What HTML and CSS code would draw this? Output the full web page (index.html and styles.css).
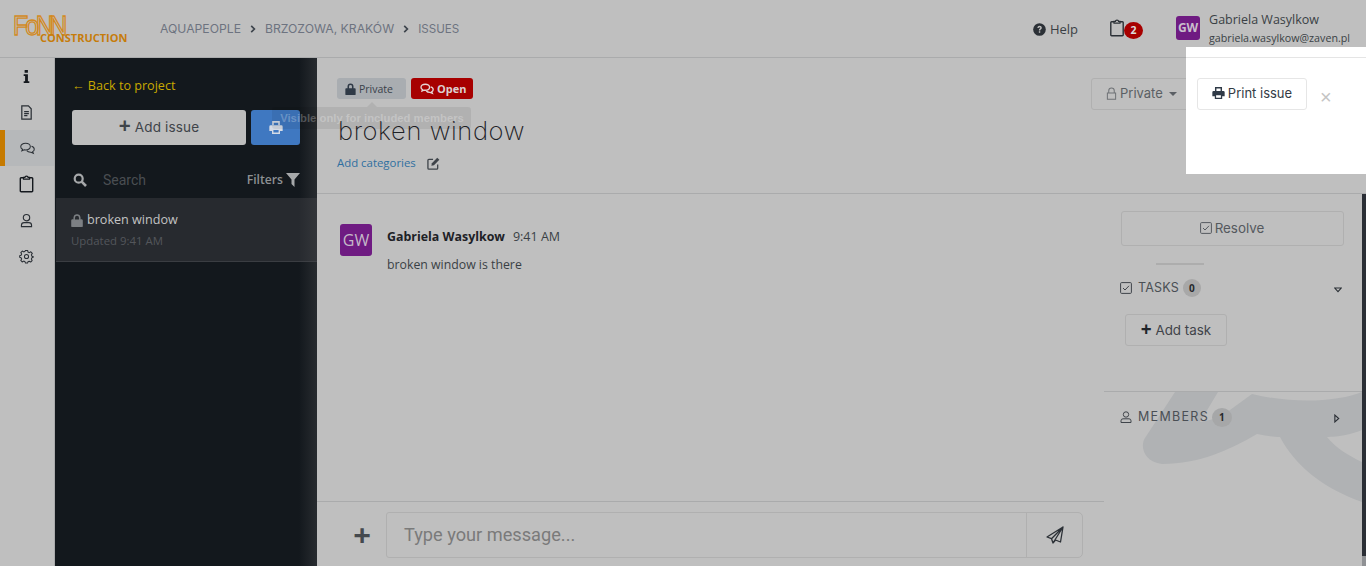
FILE: index.html
```html
<!DOCTYPE html>
<html lang="en">
<head>
<meta charset="utf-8">
<title>broken window</title>
<link rel="stylesheet" href="styles.css">
</head>
<body>
<div class="app">
  <header class="topbar">
    <div class="logo">
      <span class="logo-mark"><span class="lm-f">F</span><span class="lm-o">o</span><span class="lm-n">N</span>N</span>
      <span class="logo-sub">CONSTRUCTION</span>
    </div>
    <nav class="crumbs">
      <span>AQUAPEOPLE</span>
      <svg class="chev" viewBox="0 0 6 8"><path d="M1.2 .8 4.4 4 1.2 7.2" fill="none" stroke="#3d444c" stroke-width="1.7"/></svg>
      <span>BRZOZOWA, KRAKÓW</span>
      <svg class="chev" viewBox="0 0 6 8"><path d="M1.2 .8 4.4 4 1.2 7.2" fill="none" stroke="#3d444c" stroke-width="1.7"/></svg>
      <span class="crumb-last">ISSUES</span>
    </nav>
    <div class="top-right">
      <a class="help">
        <svg class="help-ico" viewBox="0 0 14 14"><circle cx="7" cy="7" r="6.8" fill="#2b3036"/><path d="M4.700 5.300C4.800 3.900 5.800 3 7.100 3 8.400 3 9.500 3.900 9.500 5.100 9.500 6.700 7.800 6.700 7.800 8H6.300C6.300 6 7.900 6.100 7.900 5.200 7.900 4.800 7.500 4.500 7 4.500 6.500 4.500 6.200 4.800 6.100 5.500ZM6.300 8.800H7.800V10.500H6.300Z" fill="#bfbfbf"/></svg>
        Help
      </a>
      <div class="tasks-badge">
        <svg class="clip" viewBox="0 0 14 18"><path d="M4 2.800H1.600A.8.8 0 0 0 .8 3.600V16A.8.8 0 0 0 1.600 16.800H12.400A.8.8 0 0 0 13.200 16V3.600A.8.8 0 0 0 12.400 2.800H10" fill="none" stroke="#2b3036" stroke-width="1.400"/><path d="M4 4.200V2.400H5.400C5.500 .6 8.500 .6 8.600 2.400H10V4.200Z" fill="none" stroke="#2b3036" stroke-width="1.200"/></svg>
        <span class="count">2</span>
      </div>
      <div class="user">
        <span class="avatar-sm">GW</span>
        <div class="user-text">
          <div class="user-name">Gabriela Wasylkow</div>
          <div class="user-mail">gabriela.wasylkow@zaven.pl</div>
        </div>
      </div>
    </div>
  </header>

  <div class="body">
    <aside class="rail">
      <div class="rail-item"><svg class="ri" viewBox="0 0 16 16"><path d="M6 1H9.500V4H6ZM5 5.500H9.500V13H11V15H5V13H6.500V7.500H5Z" fill="#15191e"/></svg></div>
      <div class="rail-item"><svg class="ri" viewBox="0 0 16 16"><path d="M3 1H10L13 4V15H3ZM5.500 7H10.500M5.500 9.200H10.500M5.500 11.400H9" fill="none" stroke="#2a2f35" stroke-width="1.300"/></svg></div>
      <div class="rail-item active"><svg class="ri" viewBox="0 0 16 16"><path d="M6 2.500C3 2.500 .8 4 .8 6 .8 7.200 1.500 8.200 2.700 8.800L2 10.500 4.600 9.400C5 9.450 5.500 9.500 6 9.500 9 9.500 11 8 11 6 11 4 9 2.500 6 2.500Z" fill="none" stroke="#2a2f35" stroke-width="1.100"/><path d="M12.300 5.600C14.100 6.100 15.200 7.300 15.200 8.700 15.200 9.800 14.600 10.700 13.500 11.300L14.200 13 11.700 11.900C9.900 12 8.100 11.400 7.200 10.300" fill="none" stroke="#2a2f35" stroke-width="1.100"/></svg></div>
      <div class="rail-item"><svg class="ri ri-tall" viewBox="0 0 14 18"><path d="M4 2.800H1.600A.8.8 0 0 0 .8 3.600V16A.8.8 0 0 0 1.600 16.800H12.400A.8.8 0 0 0 13.200 16V3.600A.8.8 0 0 0 12.400 2.800H10" fill="none" stroke="#15191e" stroke-width="1.400"/><path d="M4 4.200V2.400H5.400C5.500 .6 8.500 .6 8.600 2.400H10V4.200Z" fill="none" stroke="#15191e" stroke-width="1.200"/></svg></div>
      <div class="rail-item"><svg class="ri" viewBox="0 0 16 16"><circle cx="8" cy="5" r="3.400" fill="none" stroke="#2a2f35" stroke-width="1.200"/><path d="M2.600 14.500V13A2.800 2.800 0 0 1 5.400 10.300H10.600A2.800 2.800 0 0 1 13.400 13V14.500Z" fill="none" stroke="#2a2f35" stroke-width="1.200"/></svg></div>
      <div class="rail-item"><svg class="ri" viewBox="0 0 16 16"><circle cx="8" cy="8" r="2.200" fill="none" stroke="#2a2f35" stroke-width="1.100"/><path d="M6.800 1.500H9.200L9.600 3.300 11 3.900 12.600 3 14.200 4.700 13.200 6.200 13.800 7.700 15.300 8.200V8.700L13.800 9.400 13.200 10.600 14 12.300 12.400 13.900 10.900 13 9.600 13.600 9.100 15H6.900L6.400 13.500 5 12.900 3.400 13.800 1.900 12.200 2.800 10.700 2.200 9.300.7 8.800V7.200L2.200 6.700 2.800 5.300 1.900 3.800 3.500 2.200 5 3.100 6.400 2.500Z" fill="none" stroke="#2a2f35" stroke-width="1.100" stroke-linejoin="round"/></svg></div>
    </aside>

    <section class="issues">
      <a class="back">← Back to project</a>
      <div class="issue-actions">
        <button class="btn-add"><span class="plus">+</span> Add issue</button>
        <button class="btn-print">
          <svg class="pr" viewBox="0 0 16 15"><path d="M4.500 5V1H11.500V5" fill="none" stroke="#d4dbe6" stroke-width="1.800"/><path d="M1.800 5H14.200A1.500 1.500 0 0 1 15.700 6.500V11.500H.3V6.500A1.500 1.500 0 0 1 1.800 5Z" fill="#d4dbe6"/><path d="M4.200 9.500H11.800V14.100H4.200Z" fill="#3f78c1" stroke="#d4dbe6" stroke-width="1.600"/></svg>
        </button>
      </div>
      <div class="search-row">
        <svg class="mag" viewBox="0 0 14 14"><circle cx="5.700" cy="5.700" r="4" fill="none" stroke="#a6a8aa" stroke-width="2.200"/><path d="M8.700 8.700 13 13" stroke="#a6a8aa" stroke-width="2.600"/></svg>
        <span class="search-ph">Search</span>
        <span class="filters">Filters</span>
        <svg class="funnel" viewBox="0 0 14 14"><path d="M0 0H14L8.500 6.500V14L5.500 11V6.500Z" fill="#a6a8aa"/></svg>
      </div>
      <div class="issue-item">
        <div class="issue-name">
          <svg class="lock-i" viewBox="0 0 12 14"><path d="M2.500 6V4A3.500 3.500 0 0 1 9.500 4V6M1 6H11A1 1 0 0 1 12 7V13A1 1 0 0 1 11 14H1A1 1 0 0 1 0 13V7A1 1 0 0 1 1 6Z" fill="#7d8084" stroke="#7d8084" stroke-width=".6"/><path d="M3.800 6V4.200A2.200 2.200 0 0 1 8.200 4.200V6Z" fill="#272a2f"/></svg>
          broken window
        </div>
        <div class="issue-time">Updated 9:41 AM</div>
      </div>
    </section>

    <main class="content">
      <div class="issue-head">
        <div class="tags">
          <span class="tag tag-private">
            <svg class="tag-ico" viewBox="0 0 12 14"><path d="M2.500 6V4A3.500 3.500 0 0 1 9.500 4V6H11A1 1 0 0 1 12 7V13A1 1 0 0 1 11 14H1A1 1 0 0 1 0 13V7A1 1 0 0 1 1 6ZM4.300 6H7.700V4A1.700 1.700 0 0 0 4.300 4Z" fill="#2f3a47"/></svg>
            Private
          </span>
          <span class="tag tag-open">
            <svg class="tag-ico2" viewBox="0 0 16 14"><path d="M6 1.500C3 1.500 1 3 1 5 1 6.100 1.600 7.100 2.700 7.700L2.200 9.300 4.500 8.400C5 8.450 5.500 8.500 6 8.500 9 8.500 11 7 11 5 11 3 9 1.500 6 1.500ZM12.300 4.600C14.100 5.100 15.200 6.300 15.200 7.700 15.200 8.800 14.600 9.700 13.500 10.300L14.200 12 11.700 10.900C9.900 11 8.100 10.400 7.200 9.300" fill="none" stroke="#e6d4d4" stroke-width="1.600"/></svg>
            Open
          </span>
        </div>
        <h1 class="title">broken window</h1>
        <div class="cats">
          <a class="cats-link">Add categories</a>
          <svg class="edit" viewBox="0 0 14 14"><path d="M6.500 2.500H2A1 1 0 0 0 1 3.500V12A1 1 0 0 0 2 13H10.500A1 1 0 0 0 11.500 12V8" fill="none" stroke="#3f444a" stroke-width="1.400"/><path d="M11 .8 13.300 3 7.500 8.800 4.700 9.400 5.300 6.600Z" fill="#3f444a"/></svg>
        </div>
      </div>
      <div class="columns">
        <div class="chat">
          <div class="messages">
            <div class="message">
              <span class="avatar-lg">GW</span>
              <div class="msg-body">
                <div class="msg-meta"><strong>Gabriela Wasylkow</strong><span class="msg-time">9:41 AM</span></div>
                <div class="msg-text">broken window is there</div>
              </div>
            </div>
          </div>
          <div class="composer">
            <span class="composer-plus">+</span>
            <div class="composer-box">
              <span class="composer-ph">Type your message...</span>
              <span class="composer-send">
                <svg class="send" viewBox="0 0 18 18"><path d="M17 1 1 11 5.500 12.700 7 17 9.500 14 14.500 16ZM17 1 5.500 12.700M17 1 7 17" fill="none" stroke="#2b3036" stroke-width="1.300" stroke-linejoin="round"/></svg>
              </span>
            </div>
          </div>
        </div>
        <aside class="side">
          <svg class="swirl" viewBox="0 0 258 175"><path d="M71 0 41 46C36 53 39 70 58 72 96 72 125 58 153 42 162 44 170 45 176 45 190 72 218 96 258 110V70C245 64 232 56 223 45 236 45 248 42 258 38V0C232 10 190 12 148 2L126 18C120 22 112 28 96 30L114 0Z" fill="#b0b2b4"/></svg>
          <div class="side-top">
            <button class="btn-resolve">
              <svg class="chk" viewBox="0 0 12 12"><rect x=".6" y=".6" width="10.800" height="10.800" rx="1" fill="none" stroke="#555a60" stroke-width="1"/><path d="M3 6 5 8 9 3.800" fill="none" stroke="#555a60" stroke-width="1"/></svg>
              Resolve
            </button>
            <div class="short-rule"></div>
            <div class="sec-head">
              <svg class="chk2" viewBox="0 0 12 12"><rect x=".6" y=".6" width="10.800" height="10.800" rx="1" fill="none" stroke="#3f444a" stroke-width="1"/><path d="M3 6 5 8 9 3.800" fill="none" stroke="#3f444a" stroke-width="1"/></svg>
              <span class="sec-title">TASKS</span>
              <span class="pill">0</span>
              <svg class="tri-d" viewBox="0 0 10 7"><path d="M1 1H9L5 5.500Z" fill="none" stroke="#2b3036" stroke-width="1.300"/></svg>
            </div>
            <button class="btn-task"><span class="plus plus-sm">+</span> Add task</button>
          </div>
          <div class="side-bottom">
            <div class="sec-head sec-members">
              <svg class="chk2" viewBox="0 0 12 12"><circle cx="6" cy="3.500" r="2.700" fill="none" stroke="#3f444a" stroke-width="1"/><path d="M1 11.500V9.800A2 2 0 0 1 3 7.800H9A2 2 0 0 1 11 9.800V11.500Z" fill="none" stroke="#3f444a" stroke-width="1"/></svg>
              <span class="sec-title sec-title-m">MEMBERS</span>
              <span class="pill pill-m">1</span>
              <svg class="tri-r" viewBox="0 0 7 10"><path d="M1 1V9L5.500 5Z" fill="none" stroke="#2b3036" stroke-width="1.300"/></svg>
            </div>
          </div>
        </aside>
        <div class="scrollbar"></div>
      </div>
    </main>
  </div>

  <div class="tooltip">Visible only for included members</div>
  <button class="btn-private">
    <svg class="lock-o" viewBox="0 0 12 14"><path d="M3 6V4A3 3 0 0 1 9 4V6M1.500 6.500H10.500V13.300H1.500Z" fill="none" stroke="#6f7276" stroke-width="1.100"/></svg>
    Private
    <span class="caret"></span>
  </button>
  <div class="spotlight">
    <div class="spot-rule"></div>
    <button class="btn-printissue">
      <svg class="pr2" viewBox="0 0 16 15"><path d="M4.500 5V1H11.500V5" fill="none" stroke="#2f3a47" stroke-width="1.800"/><path d="M1.800 5H14.200A1.500 1.500 0 0 1 15.700 6.500V11.500H.3V6.500A1.500 1.500 0 0 1 1.800 5Z" fill="#2f3a47"/><path d="M4.200 9.500H11.800V14.100H4.200Z" fill="#fff" stroke="#2f3a47" stroke-width="1.600"/></svg>
      Print issue
    </button>
    <span class="close">×</span>
  </div>
</div>
</body>
</html>
```
FILE: styles.css
```css
* { box-sizing: border-box; }
html, body { margin: 0; height: 100%; }
body { background: #bfbfbf; font-family: "Open Sans", "Noto Sans", sans-serif; color: #2b3036; overflow: hidden; }
button { font-family: inherit; cursor: pointer; }
.app { position: relative; width: 1366px; height: 566px; overflow: hidden; display: flex; flex-direction: column; }

.topbar { height: 58px; flex: none; display: flex; align-items: center; border-bottom: 1px solid #aaabac; }
.logo { position: relative; width: 160px; height: 58px; flex: none; }
.logo-mark { position: absolute; left: 13px; top: 9px; font: 400 25px/32px "Liberation Sans", sans-serif; letter-spacing: -4.500px; color: transparent; -webkit-text-stroke: 1.200px #d38a1e; transform: scaleY(1.1); }
.lm-f { letter-spacing: -3px; }
.lm-o { letter-spacing: -3.500px; }
.lm-n { letter-spacing: -4.500px; }
.logo-sub { position: absolute; left: 40px; top: 30px; font: 700 11px/16px "Open Sans", sans-serif; color: #c67c0b; }
.crumbs { display: flex; align-items: center; font: 400 12.200px/16px "Inter", sans-serif; color: #6d7380; }
.crumb-last { font-size: 11.600px; }
.chev { width: 6px; height: 8px; margin: 0 9px; }
.top-right { margin-left: auto; display: flex; align-items: center; }
.help { display: flex; align-items: center; gap: 4px; font-size: 13px; color: #3a3f45; margin-top: 1px; }
.help-ico { width: 13px; height: 13px; }
.tasks-badge { position: relative; width: 33px; height: 22px; margin-left: 32px; }
.clip { width: 14px; height: 18px; position: absolute; left: 0; top: 1px; }
.count { position: absolute; left: 14px; top: 4px; width: 19px; height: 17px; border-radius: 50%; background: #a70000; color: #dcdcdc; font: 700 10.500px/17px "Open Sans", sans-serif; text-align: center; }
.user { display: flex; align-items: flex-start; margin-left: 33px; margin-right: 16px; margin-top: -1px; }
.avatar-sm { width: 24px; height: 24px; border-radius: 3px; background: #6f1b82; color: #c9bfcc; font: 700 12px/24px "Open Sans", sans-serif; text-align: center; margin-top: 5px; }
.user-text { margin-left: 9px; }
.user-name { font: 400 12.500px/17px "Open Sans", sans-serif; color: #3a3f45; }
.user-mail { font: 400 10.700px/15px "Open Sans", sans-serif; color: #3a3f45; margin-top: 3px; }

.body { flex: 1; display: flex; min-height: 0; }
.rail { width: 55px; flex: none; border-right: 1px solid #aaabac; }
.rail-item { height: 36px; display: flex; align-items: center; justify-content: center; padding-right: 1px; }
.rail-item.active { background: #b6b8ba; border-left: 5px solid #c67a00; padding-right: 5px; }
.ri { width: 15px; height: 15px; }
.ri-tall { height: 18px; }

.issues { width: 262px; flex: none; background: #13181d; display: flex; flex-direction: column; position: relative; }
.issues::after { content: ""; position: absolute; right: 0; top: 0; bottom: 0; width: 18px; background: linear-gradient(to right, rgba(60,60,60,0), rgba(70,72,75,.4)); pointer-events: none; }
.back { display: block; margin: 19px 0 0 17px; font-size: 12.600px; line-height: 17px; color: #c9a800; }
.issue-actions { display: flex; gap: 5px; margin: 16px 0 0 17px; height: 35px; }
.btn-add { width: 174px; height: 35px; border: 0; border-radius: 3px; background: #bdbdbd; color: #3f444a; font: 400 13.500px/35px "Inter", sans-serif; letter-spacing: .15px; padding: 0; }
.plus { font: 700 21px/1 "Open Sans", sans-serif; color: #3f444a; vertical-align: -1px; }
.btn-print { width: 49px; height: 35px; border: 0; border-radius: 3px; background: #3f78c1; display: flex; align-items: center; justify-content: center; padding: 0; }
.pr { width: 14px; height: 13px; }
.search-row { display: flex; align-items: center; height: 20px; margin: 25px 17px 0 18px; }
.mag { width: 14px; height: 14px; }
.search-ph { margin-left: 16px; font: 400 14px/20px "Roboto", sans-serif; color: #4a4e52; }
.filters { margin-left: auto; margin-top: -2px; font-size: 12.200px; font-weight: 600; color: #8d9093; }
.funnel { width: 14px; height: 14px; margin-left: 3px; }
.issue-item { height: 64px; margin: 8px 0 0 1px; background: #272a2f; border-bottom: 1px solid #3a3d42; padding: 13px 0 0 15px; }
.issue-name { display: flex; align-items: center; gap: 4px; font-size: 12.600px; line-height: 18px; color: #c3c3c3; }
.lock-i { width: 12px; height: 13px; }
.issue-time { font-size: 11.400px; line-height: 16px; color: #53565b; margin-top: 4px; }

.content { flex: 1; display: flex; flex-direction: column; min-width: 0; }
.issue-head { height: 136px; flex: none; padding: 20px 0 0 20px; border-bottom: 1px solid #aaabac; }
.tags { display: flex; gap: 5px; }
.tag { display: flex; align-items: center; height: 21px; border-radius: 3px; font-size: 10.500px; line-height: 22px; }
.tag-private { width: 69px; background: #a9adb1; color: #39414a; padding-left: 8px; gap: 3px; }
.tag-open { width: 62px; background: #a70000; color: #dcd0d0; font-weight: 700; font-size: 11px; padding-left: 9px; gap: 3px; }
.tag-ico { width: 11px; height: 12px; }
.tag-ico2 { width: 14px; height: 12px; }
.title { margin: 15px 0 0 1px; font: 200 25.500px/34px "Inter", sans-serif; letter-spacing: .6px; color: #1d2126; }
.cats { display: flex; align-items: center; margin-top: 7px; }
.cats-link { font-size: 11.400px; line-height: 16px; color: #2f6f9f; }
.edit { width: 13px; height: 13px; margin-left: 11px; }

.columns { flex: 1; display: flex; min-height: 0; }
.chat { width: 787px; flex: none; display: flex; flex-direction: column; }
.messages { flex: 1; padding: 30px 0 0 23px; }
.message { display: flex; }
.avatar-lg { width: 32px; height: 32px; border-radius: 3px; background: #6f1b82; color: #c5b9c9; font: 400 16px/32px "Open Sans", sans-serif; text-align: center; flex: none; }
.msg-body { margin-left: 15px; }
.msg-meta { font-size: 12.400px; line-height: 17px; margin-top: 4px; color: #1d2126; }
.msg-meta strong { font-weight: 700; }
.msg-time { margin-left: 8px; font-size: 12.500px; color: #3a3f45; }
.msg-text { font-size: 12.300px; line-height: 17px; margin-top: 11px; color: #3a3f45; }
.composer { height: 65px; flex: none; border-top: 1px solid #aaabac; display: flex; padding: 10px 21px 0 0; }
.composer-plus { width: 69px; padding-right: 15px; text-align: right; font: 700 31px/44px "Open Sans", sans-serif; color: #45494e; }
.composer-box { flex: 1; height: 46px; display: flex; border: 1px solid #b0b0b0; border-radius: 3px 5px 5px 3px; }
.composer-ph { flex: 1; padding-left: 17px; font: 400 18.200px/44px "Roboto", sans-serif; color: #7a7a7a; }
.composer-send { width: 56px; border-left: 1px solid #b0b0b0; display: flex; align-items: center; justify-content: center; }
.send { width: 18px; height: 18px; }

.side { position: relative; width: 258px; flex: none; display: flex; flex-direction: column; }
.swirl { position: absolute; left: 0; top: 198px; width: 258px; height: 175px; }
.side-top { position: relative; height: 198px; border-bottom: 1px solid #aaabac; padding: 17px 0 0 17px; }
.btn-resolve { display: flex; align-items: center; justify-content: center; gap: 3px; width: 223px; height: 35px; background: none; border: 1px solid #b0b0b0; border-radius: 3px; font: 400 13.400px/33px "Inter", sans-serif; color: #55595e; padding: 0 1px 1px 0; }
.chk { width: 12px; height: 12px; }
.short-rule { width: 48px; height: 2px; background: #adadad; margin: 17px 0 0 35px; }
.sec-head { display: flex; align-items: center; height: 20px; margin: 13px 20px 0 -1px; }
.chk2 { width: 12px; height: 12px; }
.sec-title { margin-left: 6px; font: 400 12.500px/20px "Inter", sans-serif; letter-spacing: .2px; color: #4a4f55; }
.sec-title-m { letter-spacing: 1.300px; }
.pill { width: 18px; height: 18px; margin-left: 4px; border-radius: 50%; background: #a8a8a8; color: #26292d; font: 700 10px/18px "Open Sans", sans-serif; text-align: center; }
.tri-d { width: 8px; height: 6px; margin-left: auto; margin-top: 3px; }
.btn-task { display: block; width: 102px; height: 32px; margin: 16px 0 0 4px; background: none; border: 1px solid #b0b0b0; border-radius: 3px; font: 400 13.400px/30px "Inter", sans-serif; color: #3f444a; padding: 0; }
.plus-sm { font-size: 19px; vertical-align: -1px; color: #20242a; }
.side-bottom { position: relative; padding: 0 0 0 17px; }
.sec-members { margin-top: 15px; }
.pill-m { width: 20px; height: 19px; line-height: 19px; margin-left: 3px; background: #a6a7a8; }
.tri-r { width: 6px; height: 9px; margin-left: auto; margin-top: 3px; margin-right: 2px; }
.scrollbar { position: relative; width: 4px; flex: none; background: #2b2f36; height: 100%; }
.scrollbar::after { content: ""; position: absolute; left: 0; right: 0; bottom: 0; height: 10px; background: #8f9194; }

.tooltip { position: absolute; left: 272px; top: 107px; width: 199px; height: 22px; background: rgba(0,0,0,.07); border-radius: 3px; color: rgba(255,255,255,.25); font: 700 11.300px/22px "Liberation Sans", sans-serif; text-align: center; padding-left: 1px; }
.tooltip::before { content: ""; position: absolute; left: 95px; top: -5px; border: 5px solid transparent; border-top: 0; border-bottom-color: rgba(0,0,0,.07); }
.btn-private { position: absolute; left: 1091px; top: 78px; width: 101px; height: 32px; background: none; border: 1px solid #b0b0b0; border-radius: 3px; display: flex; align-items: center; padding: 0 0 2px 14px; gap: 3px; font: 400 13px/30px "Inter", sans-serif; color: #5b5f64; }
.lock-o { width: 11px; height: 13px; }
.caret { margin-left: 3px; border: 4px solid transparent; border-top-color: #5b5f64; border-bottom: 0; margin-top: 2px; }
.spotlight { position: absolute; left: 1186px; top: 47px; width: 180px; height: 127px; background: #fff; }
.spot-rule { position: absolute; left: 0; right: 0; top: 10px; height: 1px; background: #e5e5e5; }
.btn-printissue { position: absolute; left: 11px; top: 31px; width: 110px; height: 32px; background: #fff; border: 1px solid #e6e6e6; border-radius: 3px; display: flex; align-items: center; justify-content: center; gap: 3px; font: 400 13px/30px "Inter", sans-serif; color: #333a44; padding: 0 0 2px; }
.pr2 { width: 13px; height: 12px; }
.close { position: absolute; left: 134px; top: 36px; font: 400 20px/28px "Liberation Sans", sans-serif; color: #c4c4c4; }
```
